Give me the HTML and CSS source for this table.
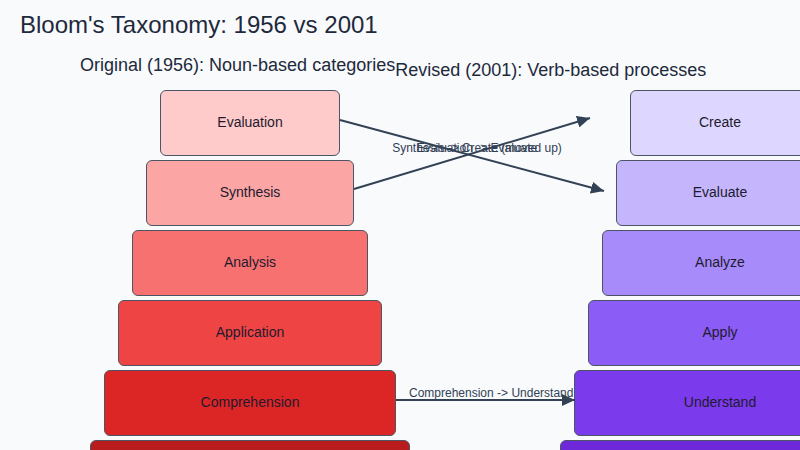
FILE: index.html
```html
<!DOCTYPE html>
<html lang="en">
<head>
<meta charset="utf-8">
<title>Bloom's Taxonomy: 1956 vs 2001</title>
<link rel="stylesheet" href="styles.css">
</head>
<body>
<div class="page">
  <h1 class="title">Bloom's Taxonomy: 1956 vs 2001</h1>
  <div class="headers">
    <span class="hdr hdr-orig">Original (1956): Noun-based categories</span>
    <span class="hdr hdr-rev">Revised (2001): Verb-based processes</span>
  </div>
  <div class="pyramids">
    <div class="column">
      <div class="box w1 red1">Evaluation</div>
      <div class="box w2 red2">Synthesis</div>
      <div class="box w3 red3">Analysis</div>
      <div class="box w4 red4">Application</div>
      <div class="box w5 red5">Comprehension</div>
      <div class="box w6 red6">Knowledge</div>
    </div>
    <div class="column">
      <div class="box w1 vio1">Create</div>
      <div class="box w2 vio2">Evaluate</div>
      <div class="box w3 vio3">Analyze</div>
      <div class="box w4 vio4">Apply</div>
      <div class="box w5 vio5">Understand</div>
      <div class="box w6 vio6">Remember</div>
    </div>
  </div>
  <svg class="arrows" width="800" height="450" viewBox="0 0 800 450" xmlns="http://www.w3.org/2000/svg">
    <defs>
      <marker id="ah" markerUnits="userSpaceOnUse" markerWidth="13" markerHeight="12" refX="13" refY="6" orient="auto">
        <path d="M0,0 L13,6 L0,12 z" fill="#334155"/>
      </marker>
    </defs>
    <line x1="340" y1="120" x2="604" y2="191" class="edge" marker-end="url(#ah)"/>
    <line x1="354" y1="189" x2="590" y2="118" class="edge" marker-end="url(#ah)"/>
    <line x1="396" y1="400" x2="575" y2="400" class="edge" marker-end="url(#ah)"/>
    <text x="477" y="152" class="elabel" text-anchor="middle">Synthesis -&gt; Create (moved up)</text>
    <text x="477" y="152" class="elabel" text-anchor="middle">Evaluation -&gt; Evaluate</text>
    <text x="409" y="397" class="elabel">Comprehension -&gt; Understand</text>
  </svg>
</div>
</body>
</html>
```
FILE: styles.css
```css
html, body {
  margin: 0;
  padding: 0;
  overflow: hidden;
}
body {
  background: #f8fafc;
  font-family: "Liberation Sans", Arial, sans-serif;
  color: #1e293b;
}
.page {
  position: relative;
  width: 800px;
  height: 450px;
  overflow: hidden;
}
.title {
  margin: 0;
  padding: 11px 0 0 20px;
  font-size: 24px;
  line-height: 28px;
  font-weight: normal;
  color: #1e293b;
}
.headers {
  display: flex;
  align-items: flex-start;
  padding-left: 80px;
  margin-top: 16px;
  height: 35px;
}
.hdr {
  font-size: 18px;
  line-height: 21px;
  white-space: nowrap;
  color: #1e293b;
}
.hdr-rev {
  margin-top: 5px;
}
.pyramids {
  display: flex;
  gap: 150px;
  padding-left: 90px;
  width: 1000px;
}
.column {
  display: flex;
  flex-direction: column;
  align-items: center;
  gap: 4px;
  width: 320px;
  flex-shrink: 0;
}
.box {
  box-sizing: border-box;
  height: 66px;
  padding-bottom: 2px;
  display: flex;
  align-items: center;
  justify-content: center;
  border: 1.5px solid #4b5563;
  border-radius: 6px;
  font-size: 14px;
  color: #1e1b2e;
}
.w1 { width: 180px; }
.w2 { width: 208px; }
.w3 { width: 236px; }
.w4 { width: 264px; }
.w5 { width: 292px; }
.w6 { width: 320px; }
.red1 { background: #fecaca; }
.red2 { background: #fca5a5; }
.red3 { background: #f87171; }
.red4 { background: #ef4444; }
.red5 { background: #dc2626; }
.red6 { background: #b91c1c; }
.vio1 { background: #ddd6fe; }
.vio2 { background: #c4b5fd; }
.vio3 { background: #a78bfa; }
.vio4 { background: #8b5cf6; }
.vio5 { background: #7c3aed; }
.vio6 { background: #6d28d9; }
.arrows {
  position: absolute;
  left: 0;
  top: 0;
  pointer-events: none;
}
.edge {
  stroke: #334155;
  stroke-width: 2;
}
.elabel {
  font-family: "Liberation Sans", Arial, sans-serif;
  font-size: 12px;
  fill: #334155;
}
```
